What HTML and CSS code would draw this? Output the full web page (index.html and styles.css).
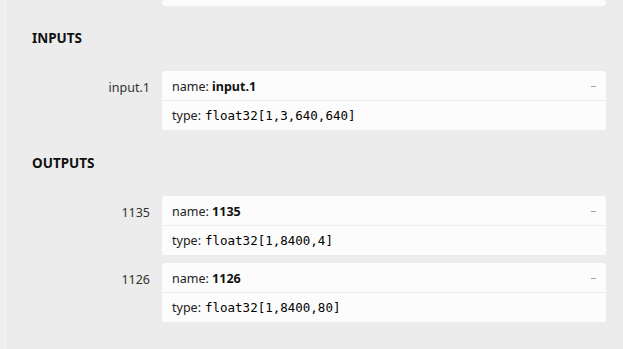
FILE: index.html
```html
<!DOCTYPE html>
<html lang="en">
<head>
    <meta charset="UTF-8">
    <meta name="viewport" content="width=device-width, initial-scale=1.0">
    <title>Model Properties</title>
    <link rel="stylesheet" href="styles.css">
</head>
<body>
    <div class="sidebar">
        <div class="tail">
            <div class="card card-tail"></div>
        </div>

        <div class="section">
            <div class="section-title">INPUTS</div>
            <div class="item">
                <div class="item-name">input.1</div>
                <div class="card">
                    <div class="row row-name">
                        <span>name: <b>input.1</b></span>
                        <span class="toggle"></span>
                    </div>
                    <div class="row row-type">type: <code>float32[1,3,640,640]</code></div>
                </div>
            </div>
        </div>

        <div class="section">
            <div class="section-title">OUTPUTS</div>
            <div class="item">
                <div class="item-name">1135</div>
                <div class="card">
                    <div class="row row-name">
                        <span>name: <b>1135</b></span>
                        <span class="toggle"></span>
                    </div>
                    <div class="row row-type">type: <code>float32[1,8400,4]</code></div>
                </div>
            </div>
            <div class="item">
                <div class="item-name">1126</div>
                <div class="card">
                    <div class="row row-name">
                        <span>name: <b>1126</b></span>
                        <span class="toggle"></span>
                    </div>
                    <div class="row row-type">type: <code>float32[1,8400,80]</code></div>
                </div>
            </div>
        </div>
    </div>
</body>
</html>
```

FILE: styles.css
```css
body {
    margin: 0;
    background-color: #efefef;
    font-family: "Noto Sans", "Open Sans", sans-serif;
    font-size: 12.5px;
    line-height: 16px;
    color: #222;
    height: 100vh;
    overflow: hidden;
}
.sidebar {
    margin-left: 5px;
    border-left: 1px solid #f6f6f6;
    background-color: #ececec;
    height: 100%;
    padding: 0 17px 0 26px;
}
.tail {
    padding-left: 130px;
}
.card-tail {
    height: 6px;
    border-radius: 0 0 3px 3px;
}
.section {
    margin-top: 24px;
}
.section + .section {
    margin-top: 25px;
}
.section-title {
    font-weight: bold;
    font-size: 13.5px;
    color: #111;
    margin-bottom: 25px;
}
.item {
    display: flex;
    gap: 12px;
    margin-bottom: 8px;
}
.item-name {
    width: 118px;
    flex-shrink: 0;
    text-align: right;
    padding-top: 9px;
    color: #333;
}
.card {
    flex: 1;
    background-color: #fcfcfc;
    border-radius: 3px;
}
.row {
    padding: 0 10px;
}
.row-name {
    display: flex;
    justify-content: space-between;
    align-items: center;
    height: 30px;
    padding-top: 2px;
    box-sizing: border-box;
    border-bottom: 1px solid #eeeeee;
}
.row-name b {
    color: #111;
}
.row-type {
    height: 29px;
    display: flex;
    align-items: center;
    gap: 4px;
}
.row-type code {
    font-family: "DejaVu Sans Mono", "Liberation Mono", monospace;
    font-size: 12.5px;
    color: #000;
}
.toggle {
    width: 5px;
    height: 1px;
    background-color: #a0a0a0;
}
```
